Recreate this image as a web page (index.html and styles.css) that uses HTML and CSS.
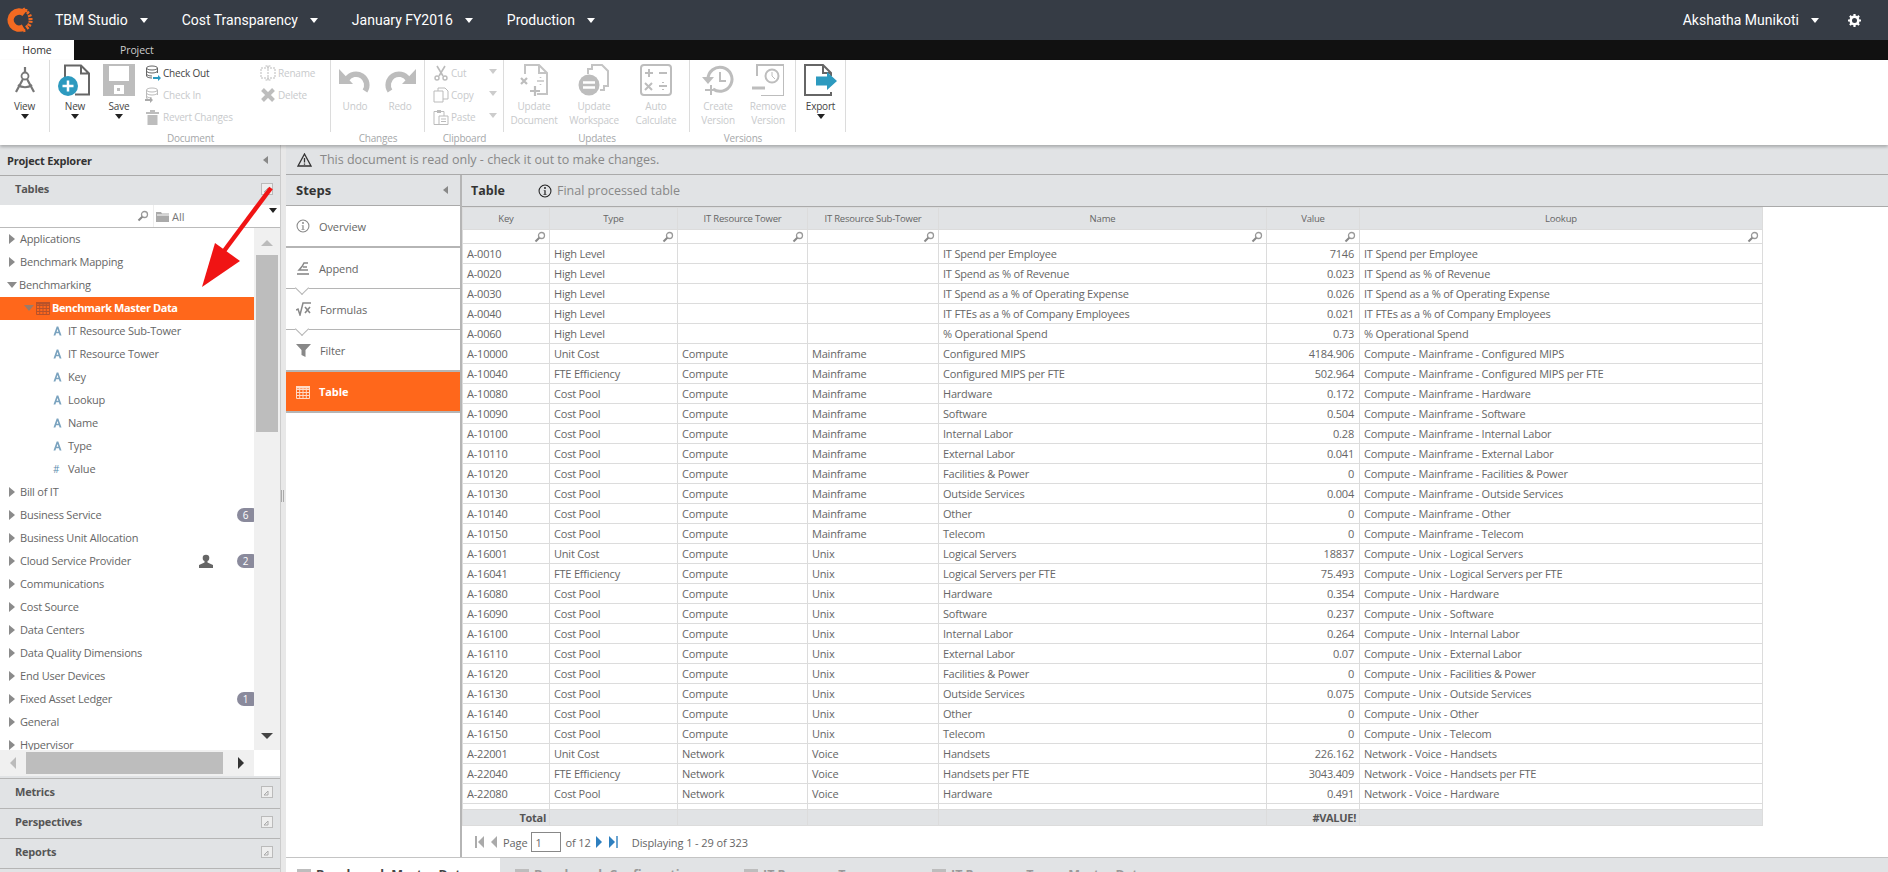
FILE: index.html
```html
<!DOCTYPE html>
<html lang="en">
<head>
  <meta charset="UTF-8">
  <title>TBM Studio - Benchmark Master Data</title>
  <link rel="stylesheet" href="styles.css">
</head>
<body>

<svg class="defs" width="0" height="0">
  <symbol id="i-search" viewBox="0 0 12 12">
    <circle cx="7.5" cy="4.5" r="3" fill="#fff" stroke="#999" stroke-width="1.3"/>
    <path d="M5.3 6.7 1.5 10.5" stroke="#888" stroke-width="2"/>
  </symbol>
  <symbol id="i-pin" viewBox="0 0 12 12">
    <rect x=".5" y=".5" width="11" height="11" fill="#eee" stroke="#bbb"/>
    <path d="M3 9h4V5M3 9l4-4" fill="none" stroke="#aaa"/>
  </symbol>
  <symbol id="i-info" viewBox="0 0 16 16">
    <circle cx="8" cy="8" r="6.8" fill="none" stroke="currentColor" stroke-width="1.2"/>
    <path d="M6.5 7h2.2v4.5h1v.8h-3.4v-.8h1V7.800h-.8z" fill="currentColor"/>
    <circle cx="8" cy="4.600" r="1.100" fill="currentColor"/>
  </symbol>
  <symbol id="i-grid" viewBox="0 0 14 14">
    <path d="M.5 1.500h13v12H.5zM.5 4.500h13M.5 7.500h13M.5 10.500h13M3.700 1.500v12M7 1.500v12M10.300 1.500v12" fill="none" stroke="currentColor"/>
    <rect x="0" y="1" width="14" height="2.500" fill="currentColor"/>
  </symbol>
  <symbol id="i-attr" viewBox="0 0 9 10">
    <path d="M.5 9.500 3.700.5h1.600l3.200 9H6.600l-.7-2.300H3.100L2.400 9.500zM3.600 5.800h1.800L4.500 3z" fill="#7aa3bf"/>
  </symbol>
  <symbol id="i-drawer" viewBox="0 0 16 16">
    <ellipse cx="7" cy="3" rx="5.500" ry="2" fill="none" stroke="currentColor"/>
    <path d="M1.500 3v8c0 1 2.500 2 5.500 2M12.500 3v5M1.500 6c0 1 2.500 2 5.500 2s5.500-1 5.500-2M1.500 9c0 1 2.500 2 5.500 2" fill="none" stroke="currentColor"/>
  </symbol>
</svg>

<header class="topbar">
  <svg class="logo" width="26" height="26" viewBox="0 0 26 26">
    <path d="M17 6.500A8.500 8.500 0 1 0 16 20.400" fill="none" stroke="#f26a21" stroke-width="6.500"/>
    <path d="M16 1l1.500 3M19 2l-.5 3M21.500 4.500l-2 2.500M24 8l-3.500 1.500M25 12h-4M25 15l-4-.5M23.500 19l-3.500-2M21 22l-2.500-3.500M17 25l-.5-3" stroke="#f26a21" stroke-width="2.200"/>
  </svg>
  <nav class="nav">
    <a>TBM Studio<i class="caret"></i></a>
    <a>Cost Transparency<i class="caret"></i></a>
    <a>January FY2016<i class="caret"></i></a>
    <a>Production<i class="caret"></i></a>
  </nav>
  <div class="user">Akshatha Munikoti<i class="caret"></i></div>
  <svg class="gear" width="13" height="13" viewBox="0 0 13 13">
    <circle cx="6.500" cy="6.500" r="3.800" fill="none" stroke="#fff" stroke-width="2.600"/>
    <path d="M6.500 0v13M0 6.500h13M1.900 1.900l9.200 9.200M11.100 1.900l-9.200 9.200" stroke="#fff" stroke-width="2.200" stroke-dasharray="2.600 7.800"/>
  </svg>
</header>

<div class="ribbon-tabs">
  <span class="rtab active">Home</span>
  <span class="rtab">Project</span>
</div>

<section class="ribbon">
  <div class="rgroup g-view">
    <div class="rbody">
      <div class="bigbtn">
        <svg width="32" height="32" viewBox="0 0 32 32">
          <circle cx="16" cy="12" r="3.500" fill="none" stroke="#777" stroke-width="1.800"/>
          <path d="M16 3v6M14 15 7 28M18 15l7 13M9 21c4 3 10 3 14 0" fill="none" stroke="#777" stroke-width="2.200"/>
        </svg>
        <span>View</span><i class="drop"></i>
      </div>
    </div>
  </div>

  <div class="rgroup g-doc">
    <div class="rbody">
      <div class="bigbtn b-new">
        <svg width="34" height="32" viewBox="0 0 34 32">
          <path d="M7 14V1.500h16l8 8v21H17M23 1.500v8h8" fill="none" stroke="#666" stroke-width="2"/>
          <circle cx="10" cy="22" r="10" fill="#2d9abf"/>
          <path d="M10 16.500v11M4.500 22h11" stroke="#fff" stroke-width="2.500"/>
        </svg>
        <span>New</span><i class="drop"></i>
      </div>
      <div class="bigbtn b-save">
        <svg width="32" height="32" viewBox="0 0 32 32">
          <path d="M0 0h32v32H0z" fill="#bdbdbd"/>
          <path d="M6 2h20v15H6z" fill="#fff"/>
          <path d="M11 21h10v9H11z" fill="#fff"/>
          <path d="M14 24h3v3h-3z" fill="#bdbdbd"/>
        </svg>
        <span>Save</span><i class="drop"></i>
      </div>
      <div class="smallcol c-check">
        <div class="smallbtn on"><svg class="ic" width="16" height="16" viewBox="0 0 16 16"><use href="#i-drawer" color="#666"/><path d="M8 12h5v-2l3 3-3 3v-2H8z" fill="#2d9abf"/></svg>Check Out</div>
        <div class="smallbtn"><svg class="ic" width="16" height="16" viewBox="0 0 16 16"><use href="#i-drawer" color="#bbb"/><path d="M0 12h5v-2l3 3-3 3v-2H0z" fill="#aaa"/></svg>Check In</div>
        <div class="smallbtn"><svg class="ic" width="16" height="16" viewBox="0 0 16 16"><path d="M1 3h13v2H1zM5 3V1h5v2zM2.500 6h10v10h-10z" fill="#bdbdbd"/></svg>Revert Changes</div>
      </div>
      <div class="smallcol c-rename">
        <div class="smallbtn"><svg class="ic" width="16" height="16" viewBox="0 0 16 16"><path d="M1 3h14v10H1zM8 1v14M5.500 1h5M5.500 15h5" fill="none" stroke="#bbb" stroke-dasharray="2 1"/></svg>Rename</div>
        <div class="smallbtn"><svg class="ic" width="16" height="16" viewBox="0 0 16 16"><path d="M2.500 2.500l11 11M13.500 2.500l-11 11" stroke="#bdbdbd" stroke-width="4"/></svg>Delete</div>
      </div>
    </div>
    <div class="rlabel">Document</div>
  </div>

  <div class="rgroup g-changes">
    <div class="rbody">
      <div class="bigbtn w-undo">
        <svg width="32" height="32" viewBox="0 0 32 32"><path d="M8 13a10.500 10.500 0 0 1 18 12" fill="none" stroke="#bdbdbd" stroke-width="5.500" transform="translate(0 2)"/><path d="M0 5v15h14z" fill="#bdbdbd"/></svg>
        <span>Undo</span>
      </div>
      <div class="bigbtn w-redo">
        <svg width="32" height="32" viewBox="0 0 32 32"><path d="M24 13A10.500 10.500 0 0 0 6 25" fill="none" stroke="#bdbdbd" stroke-width="5.500" transform="translate(0 2)"/><path d="M32 5v15H18z" fill="#bdbdbd"/></svg>
        <span>Redo</span>
      </div>
    </div>
    <div class="rlabel">Changes</div>
  </div>

  <div class="rgroup g-clip">
    <div class="rbody">
      <div class="smallcol c-clip">
        <div class="smallbtn"><svg class="ic" width="16" height="16" viewBox="0 0 16 16"><path d="M4 1l6 10M12 1 6 11" stroke="#bbb" stroke-width="1.600"/><circle cx="4" cy="13" r="2" fill="none" stroke="#bbb" stroke-width="1.400"/><circle cx="12" cy="13" r="2" fill="none" stroke="#bbb" stroke-width="1.400"/></svg>Cut<i class="drop pale"></i></div>
        <div class="smallbtn"><svg class="ic" width="16" height="16" viewBox="0 0 16 16"><path d="M1 4h9v11H1zM5 4V1h7l3 3v8h-5" fill="#fff" stroke="#bbb"/></svg>Copy<i class="drop pale"></i></div>
        <div class="smallbtn"><svg class="ic" width="16" height="16" viewBox="0 0 16 16"><path d="M1 2.500h10v13H1z" fill="#fff" stroke="#bbb"/><path d="M4 1h4v3H4z" fill="#bbb"/><path d="M6 7h9v8.500H6z" fill="#fff" stroke="#bbb"/><path d="M8 10h5M8 12.500h5" stroke="#bbb"/></svg>Paste<i class="drop pale"></i></div>
      </div>
    </div>
    <div class="rlabel">Clipboard</div>
  </div>

  <div class="rgroup g-updates">
    <div class="rbody">
      <div class="bigbtn w-upd">
        <svg width="32" height="32" viewBox="0 0 32 32"><path d="M7 10V1h14l8 8v21H19M21 1v8h8" fill="none" stroke="#c4c4c4" stroke-width="2"/><path d="M3 14l6 6M9 14l-6 6M12 27h10M17 22v10" stroke="#bdbdbd" stroke-width="2.200"/><path d="M19 17h7M22.500 13v1M22.500 20v1" stroke="#c4c4c4" stroke-width="1.600"/></svg>
        <span>Update<br>Document</span>
      </div>
      <div class="bigbtn w-upd">
        <svg width="32" height="32" viewBox="0 0 32 32"><path d="M10 10V5h4V1h10l6 6v15h-4v4h-4" fill="none" stroke="#c4c4c4" stroke-width="2"/><circle cx="11" cy="21" r="10.500" fill="#bdbdbd"/><path d="M5 18.500h12M5 23.500h12" stroke="#fff" stroke-width="2.400"/></svg>
        <span>Update<br>Workspace</span>
      </div>
      <div class="bigbtn w-auto">
        <svg width="32" height="32" viewBox="0 0 32 32"><rect x="1" y="1" width="30" height="30" rx="3" fill="none" stroke="#bdbdbd" stroke-width="2"/><path d="M5 9h8M9 5v8M19 9h8M5 19l7 7M12 19l-7 7M19 22h8M23 18v1M23 25v1" stroke="#bdbdbd" stroke-width="2"/></svg>
        <span>Auto<br>Calculate</span>
      </div>
    </div>
    <div class="rlabel">Updates</div>
  </div>

  <div class="rgroup g-ver">
    <div class="rbody">
      <div class="bigbtn w-create">
        <svg width="32" height="32" viewBox="0 0 32 32"><path d="M6 15a12 12 0 1 1 5 10" fill="none" stroke="#bdbdbd" stroke-width="3"/><path d="M0 13h12l-6 7z" fill="#bdbdbd"/><path d="M18 8v9h6" fill="none" stroke="#bdbdbd" stroke-width="2"/><path d="M3 27h8M9 22v10" stroke="#bdbdbd" stroke-width="2" transform="translate(0 -1)"/></svg>
        <span>Create<br>Version</span>
      </div>
      <div class="bigbtn w-remove">
        <svg width="32" height="32" viewBox="0 0 32 32"><path d="M5 12V1h27v31H9" fill="none" stroke="#bdbdbd" stroke-width="2"/><circle cx="20" cy="12" r="6.500" fill="none" stroke="#bdbdbd" stroke-width="2"/><path d="M20 8v4l3 3" fill="none" stroke="#bdbdbd"/><path d="M0 24h13" stroke="#bdbdbd" stroke-width="3"/></svg>
        <span>Remove<br>Version</span>
      </div>
    </div>
    <div class="rlabel">Versions</div>
  </div>

  <div class="rgroup g-export">
    <div class="rbody">
      <div class="bigbtn w-exp">
        <svg width="34" height="32" viewBox="0 0 34 32">
          <path d="M27 12V9l-8-8H1v30h26v-3M19 1v8h8" fill="none" stroke="#666" stroke-width="2"/>
          <path d="M12 15h11v-5l10 10-10 10v-5H12z" fill="#2d9abf" transform="translate(0 -1) scale(1 .9)"/>
        </svg>
        <span>Export</span><i class="drop"></i>
      </div>
    </div>
  </div>
</section>

<div class="work">
  <aside class="explorer">
    <div class="panel-head">Project Explorer<i class="collapse"></i></div>
    <div class="acc-head first">Tables<svg class="pin" width="12" height="12"><use href="#i-pin"/></svg></div>

    <div class="tree-search">
      <div class="search-box"><svg width="12" height="12"><use href="#i-search"/></svg></div>
      <div class="folder-box">
        <svg width="13" height="12" viewBox="0 0 13 12"><path d="M0 2h5l1 1.500h7V12H0z" fill="#aaa"/><path d="M1 5h12" stroke="#fff"/></svg>
        <span>All</span><i class="drop"></i>
      </div>
    </div>

    <div class="tree-wrap">
      <div class="tree">
        <div class="tn"><i class="tw"></i>Applications</div>
        <div class="tn"><i class="tw"></i>Benchmark Mapping</div>
        <div class="tn"><i class="tw open"></i>Benchmarking</div>
        <div class="tn sel"><i class="tw open"></i><svg class="tbl" width="14" height="14" color="#b8522a"><use href="#i-grid"/></svg>Benchmark Master Data</div>
        <div class="tn leaf"><svg width="9" height="10"><use href="#i-attr"/></svg>IT Resource Sub-Tower</div>
        <div class="tn leaf"><svg width="9" height="10"><use href="#i-attr"/></svg>IT Resource Tower</div>
        <div class="tn leaf"><svg width="9" height="10"><use href="#i-attr"/></svg>Key</div>
        <div class="tn leaf"><svg width="9" height="10"><use href="#i-attr"/></svg>Lookup</div>
        <div class="tn leaf"><svg width="9" height="10"><use href="#i-attr"/></svg>Name</div>
        <div class="tn leaf"><svg width="9" height="10"><use href="#i-attr"/></svg>Type</div>
        <div class="tn leaf"><b class="hash">#</b>Value</div>
        <div class="tn"><i class="tw"></i>Bill of IT</div>
        <div class="tn"><i class="tw"></i>Business Service<span class="badge">6</span></div>
        <div class="tn"><i class="tw"></i>Business Unit Allocation</div>
        <div class="tn"><i class="tw"></i>Cloud Service Provider
          <svg class="person" width="14" height="14" viewBox="0 0 14 14"><circle cx="7" cy="4" r="3.300" fill="#666"/><path d="M5.500 7h3v1.500L14 11v3H0v-3l5.500-2.500z" fill="#666"/></svg>
          <span class="badge">2</span></div>
        <div class="tn"><i class="tw"></i>Communications</div>
        <div class="tn"><i class="tw"></i>Cost Source</div>
        <div class="tn"><i class="tw"></i>Data Centers</div>
        <div class="tn"><i class="tw"></i>Data Quality Dimensions</div>
        <div class="tn"><i class="tw"></i>End User Devices</div>
        <div class="tn"><i class="tw"></i>Fixed Asset Ledger<span class="badge">1</span></div>
        <div class="tn"><i class="tw"></i>General</div>
        <div class="tn"><i class="tw"></i>Hypervisor</div>
      </div>
      <div class="vscroll">
        <i class="arr up"></i>
        <div class="vthumb"></div>
        <i class="arr down"></i>
      </div>
    </div>

    <div class="hscroll">
      <i class="arr left"></i>
      <div class="hthumb"></div>
      <i class="arr right"></i>
    </div>

    <div class="acc-head">Metrics<svg class="pin" width="12" height="12"><use href="#i-pin"/></svg></div>
    <div class="acc-head">Perspectives<svg class="pin" width="12" height="12"><use href="#i-pin"/></svg></div>
    <div class="acc-head">Reports<svg class="pin" width="12" height="12"><use href="#i-pin"/></svg></div>
  </aside>

  <div class="splitter"><i></i></div>

  <main class="main">
    <div class="notice">
      <svg width="15" height="14" viewBox="0 0 15 14"><path d="M7.500 1 14 13H1z" fill="none" stroke="#333" stroke-width="1.300"/><path d="M7.500 5v4.500M7.500 10.500v1.300" stroke="#333" stroke-width="1.300"/></svg>
      This document is read only - check it out to make changes.
    </div>

    <div class="content">
      <div class="steps">
        <div class="panel-head steps-head">Steps<i class="collapse"></i></div>
        <div class="step thick">
          <svg width="14" height="14" color="#888"><use href="#i-info"/></svg>Overview
        </div>
        <div class="step link">
          <svg width="14" height="14" viewBox="0 0 14 14"><path d="M1 13h12" stroke="#888" stroke-width="1.600"/><path d="M12 2H8L6 5.500 3 9h9M7 6h4" fill="none" stroke="#888" stroke-width="1.500"/></svg>Append
        </div>
        <div class="step link">
          <svg width="15" height="14" viewBox="0 0 15 14"><path d="M0 8l2-1 2 6L7 1h8" fill="none" stroke="#888" stroke-width="1.500"/><path d="M9 5l5 6M14 5l-5 6" stroke="#888" stroke-width="1.600"/></svg>Formulas
        </div>
        <div class="step">
          <svg width="15" height="14" viewBox="0 0 15 14"><path d="M0 1h15L9.500 7v7l-4-2V7z" fill="#888"/></svg>Filter
        </div>
        <div class="step current">
          <svg width="14" height="14" color="#fff" opacity=".75"><use href="#i-grid"/></svg>Table
        </div>
      </div>

      <div class="table-panel">
        <div class="table-head">
          <h2>Table</h2>
          <svg width="14" height="14" color="#222"><use href="#i-info"/></svg>
          <span>Final processed table</span>
        </div>
        <div class="grid-wrap">
          <table class="grid">
            <colgroup>
              <col class="c1"><col class="c2"><col class="c3"><col class="c4"><col class="c5"><col class="c6"><col class="c7">
            </colgroup>
            <thead>
              <tr class="hd"><th>Key</th><th>Type</th><th>IT Resource Tower</th><th>IT Resource Sub-Tower</th><th>Name</th><th>Value</th><th>Lookup</th></tr>
              <tr class="flt">
                <td><svg width="12" height="12"><use href="#i-search"/></svg></td>
                <td><svg width="12" height="12"><use href="#i-search"/></svg></td>
                <td><svg width="12" height="12"><use href="#i-search"/></svg></td>
                <td><svg width="12" height="12"><use href="#i-search"/></svg></td>
                <td><svg width="12" height="12"><use href="#i-search"/></svg></td>
                <td><svg width="12" height="12"><use href="#i-search"/></svg></td>
                <td><svg width="12" height="12"><use href="#i-search"/></svg></td>
              </tr>
            </thead>
            <tbody>
              <tr><td>A-0010</td><td>High Level</td><td></td><td></td><td>IT Spend per Employee</td><td class="n">7146</td><td>IT Spend per Employee</td></tr>
              <tr><td>A-0020</td><td>High Level</td><td></td><td></td><td>IT Spend as % of Revenue</td><td class="n">0.023</td><td>IT Spend as % of Revenue</td></tr>
              <tr><td>A-0030</td><td>High Level</td><td></td><td></td><td>IT Spend as a % of Operating Expense</td><td class="n">0.026</td><td>IT Spend as a % of Operating Expense</td></tr>
              <tr><td>A-0040</td><td>High Level</td><td></td><td></td><td>IT FTEs as a % of Company Employees</td><td class="n">0.021</td><td>IT FTEs as a % of Company Employees</td></tr>
              <tr><td>A-0060</td><td>High Level</td><td></td><td></td><td>% Operational Spend</td><td class="n">0.73</td><td>% Operational Spend</td></tr>
              <tr><td>A-10000</td><td>Unit Cost</td><td>Compute</td><td>Mainframe</td><td>Configured MIPS</td><td class="n">4184.906</td><td>Compute - Mainframe - Configured MIPS</td></tr>
              <tr><td>A-10040</td><td>FTE Efficiency</td><td>Compute</td><td>Mainframe</td><td>Configured MIPS per FTE</td><td class="n">502.964</td><td>Compute - Mainframe - Configured MIPS per FTE</td></tr>
              <tr><td>A-10080</td><td>Cost Pool</td><td>Compute</td><td>Mainframe</td><td>Hardware</td><td class="n">0.172</td><td>Compute - Mainframe - Hardware</td></tr>
              <tr><td>A-10090</td><td>Cost Pool</td><td>Compute</td><td>Mainframe</td><td>Software</td><td class="n">0.504</td><td>Compute - Mainframe - Software</td></tr>
              <tr><td>A-10100</td><td>Cost Pool</td><td>Compute</td><td>Mainframe</td><td>Internal Labor</td><td class="n">0.28</td><td>Compute - Mainframe - Internal Labor</td></tr>
              <tr><td>A-10110</td><td>Cost Pool</td><td>Compute</td><td>Mainframe</td><td>External Labor</td><td class="n">0.041</td><td>Compute - Mainframe - External Labor</td></tr>
              <tr><td>A-10120</td><td>Cost Pool</td><td>Compute</td><td>Mainframe</td><td>Facilities &amp; Power</td><td class="n">0</td><td>Compute - Mainframe - Facilities &amp; Power</td></tr>
              <tr><td>A-10130</td><td>Cost Pool</td><td>Compute</td><td>Mainframe</td><td>Outside Services</td><td class="n">0.004</td><td>Compute - Mainframe - Outside Services</td></tr>
              <tr><td>A-10140</td><td>Cost Pool</td><td>Compute</td><td>Mainframe</td><td>Other</td><td class="n">0</td><td>Compute - Mainframe - Other</td></tr>
              <tr><td>A-10150</td><td>Cost Pool</td><td>Compute</td><td>Mainframe</td><td>Telecom</td><td class="n">0</td><td>Compute - Mainframe - Telecom</td></tr>
              <tr><td>A-16001</td><td>Unit Cost</td><td>Compute</td><td>Unix</td><td>Logical Servers</td><td class="n">18837</td><td>Compute - Unix - Logical Servers</td></tr>
              <tr><td>A-16041</td><td>FTE Efficiency</td><td>Compute</td><td>Unix</td><td>Logical Servers per FTE</td><td class="n">75.493</td><td>Compute - Unix - Logical Servers per FTE</td></tr>
              <tr><td>A-16080</td><td>Cost Pool</td><td>Compute</td><td>Unix</td><td>Hardware</td><td class="n">0.354</td><td>Compute - Unix - Hardware</td></tr>
              <tr><td>A-16090</td><td>Cost Pool</td><td>Compute</td><td>Unix</td><td>Software</td><td class="n">0.237</td><td>Compute - Unix - Software</td></tr>
              <tr><td>A-16100</td><td>Cost Pool</td><td>Compute</td><td>Unix</td><td>Internal Labor</td><td class="n">0.264</td><td>Compute - Unix - Internal Labor</td></tr>
              <tr><td>A-16110</td><td>Cost Pool</td><td>Compute</td><td>Unix</td><td>External Labor</td><td class="n">0.07</td><td>Compute - Unix - External Labor</td></tr>
              <tr><td>A-16120</td><td>Cost Pool</td><td>Compute</td><td>Unix</td><td>Facilities &amp; Power</td><td class="n">0</td><td>Compute - Unix - Facilities &amp; Power</td></tr>
              <tr><td>A-16130</td><td>Cost Pool</td><td>Compute</td><td>Unix</td><td>Outside Services</td><td class="n">0.075</td><td>Compute - Unix - Outside Services</td></tr>
              <tr><td>A-16140</td><td>Cost Pool</td><td>Compute</td><td>Unix</td><td>Other</td><td class="n">0</td><td>Compute - Unix - Other</td></tr>
              <tr><td>A-16150</td><td>Cost Pool</td><td>Compute</td><td>Unix</td><td>Telecom</td><td class="n">0</td><td>Compute - Unix - Telecom</td></tr>
              <tr><td>A-22001</td><td>Unit Cost</td><td>Network</td><td>Voice</td><td>Handsets</td><td class="n">226.162</td><td>Network - Voice - Handsets</td></tr>
              <tr><td>A-22040</td><td>FTE Efficiency</td><td>Network</td><td>Voice</td><td>Handsets per FTE</td><td class="n">3043.409</td><td>Network - Voice - Handsets per FTE</td></tr>
              <tr><td>A-22080</td><td>Cost Pool</td><td>Network</td><td>Voice</td><td>Hardware</td><td class="n">0.491</td><td>Network - Voice - Hardware</td></tr>
              <tr class="filler"><td></td><td></td><td></td><td></td><td></td><td></td><td></td></tr>
            </tbody>
            <tfoot>
              <tr class="total"><td class="n">Total</td><td></td><td></td><td></td><td></td><td class="n">#VALUE!</td><td></td></tr>
            </tfoot>
          </table>
          <div class="pager">
            <svg width="11" height="12" viewBox="0 0 11 12"><path d="M1 0v12" stroke="#888" stroke-width="1.400"/><path d="M9 0v12L3 6z" fill="#aaa"/></svg>
            <svg class="pg-prev" width="7" height="12" viewBox="0 0 7 12"><path d="M6 0v12L0 6z" fill="#aaa"/></svg>
            <span>Page</span>
            <input class="page-input" value="1" readonly>
            <span>of 12</span>
            <svg width="7" height="12" viewBox="0 0 7 12"><path d="M0 0v12l6-6z" fill="#2d7fbf"/></svg>
            <svg width="11" height="12" viewBox="0 0 11 12"><path d="M1 0v12l6-6z" fill="#2d7fbf"/><path d="M9 0v12" stroke="#2d7fbf" stroke-width="1.400"/></svg>
            <span class="shown">Displaying 1 - 29 of 323</span>
          </div>
        </div>
      </div>
    </div>

    <div class="doc-tabs">
      <div class="dtab active"><i></i>Benchmark Master Data</div>
      <div class="dtab t2"><i></i>Benchmark Configuration</div>
      <div class="dtab t3"><i></i>IT Resource Towers</div>
      <div class="dtab t4"><i></i>IT Resource Tower Master Data</div>
    </div>
  </main>
</div>

<!-- arrow drawn on top of the screenshot -->
<svg class="annotation" width="90" height="120" viewBox="0 0 90 120">
  <path d="M81 5 34 68" stroke="#f01414" stroke-width="4.500"/>
  <path d="M12 104 25 60 50 78z" fill="#f01414"/>
</svg>

</body>
</html>
```

FILE: styles.css
```css
* {
  margin: 0;
  padding: 0;
  box-sizing: border-box;
}
html, body {
  height: 100%;
}
body {
  display: flex;
  flex-direction: column;
  overflow: hidden;
  position: relative;
  font-family: "Open Sans", "Noto Sans", sans-serif;
  font-size: 11px;
  color: #555;
  background: #e1e3e5;
}
i {
  display: inline-block;
  font-style: normal;
}
.defs {
  position: absolute;
}

/* top bar */
.topbar {
  height: 40px;
  flex: none;
  display: flex;
  align-items: center;
  background: #363c45;
  color: #fff;
  font-family: Roboto, sans-serif;
  font-size: 14px;
}
.logo {
  margin: 0 21px 0 7px;
  width: 27px;
}
.nav {
  display: flex;
}
.nav a {
  display: flex;
  align-items: center;
  margin-right: 34px;
}
.caret {
  width: 0;
  height: 0;
  margin-left: 12px;
  border: 4px solid transparent;
  border-top: 5px solid #fff;
  border-bottom: 0;
}
.user {
  margin-left: auto;
  display: flex;
  align-items: center;
}
.gear {
  margin: 0 27px 0 29px;
}

/* ribbon */
.ribbon-tabs {
  height: 20px;
  flex: none;
  display: flex;
  background: #111;
  font-size: 10.500px;
  letter-spacing: -.1px;
  line-height: 20px;
}
.rtab {
  width: 74px;
  text-align: center;
  color: #ccc;
}
.rtab.active {
  background: #fff;
  color: #333;
}
.rtab + .rtab {
  width: 90px;
  padding-left: 46px;
  text-align: left;
}
.ribbon {
  height: 85px;
  flex: none;
  display: flex;
  background: #fff;
  box-shadow: 0 2px 3px rgba(0, 0, 0, .25);
  position: relative;
  z-index: 2;
  color: #c8cacc;
  font-size: 10px;
  letter-spacing: -.2px;
}
.rgroup {
  display: flex;
  flex-direction: column;
}
.rbody {
  height: 72px;
  display: flex;
  border-right: 1px solid #dcdcdc;
}
.rlabel {
  text-align: center;
  line-height: 13px;
  color: #a5a7a9;
}
.g-view { width: 50px; }
.g-doc { width: 281px; }
.g-changes { width: 94px; }
.g-clip { width: 79px; }
.g-updates { width: 186px; }
.g-ver { width: 106px; }
.g-export { width: 50px; }

.bigbtn {
  display: flex;
  flex-direction: column;
  align-items: center;
  padding-top: 4px;
  text-align: center;
  line-height: 14px;
  white-space: nowrap;
}
.bigbtn svg {
  flex: none;
  margin-bottom: 3px;
}
.g-view .bigbtn {
  width: 49px;
  color: #444;
}
.b-new, .b-save, .w-exp {
  color: #444;
}
.b-new {
  width: 44px;
  margin-left: 3px;
}
.b-save {
  width: 44px;
}
.drop {
  width: 0;
  height: 0;
  border: 4px solid transparent;
  border-top: 5px solid #222;
  border-bottom: 0;
  margin-top: 1px;
}
.drop.pale {
  border-top-color: #ccc;
  position: absolute;
  right: 6px;
  top: 6px;
}
.smallcol {
  display: flex;
  flex-direction: column;
  padding-top: 2px;
}
.c-check {
  width: 115px;
  margin-left: 4px;
}
.c-rename {
  width: 70px;
}
.c-clip {
  width: 78px;
  padding-left: 8px;
}
.smallbtn {
  height: 22px;
  display: flex;
  align-items: center;
  position: relative;
  white-space: nowrap;
}
.smallbtn .ic {
  margin-right: 2px;
  flex: none;
}
.smallbtn.on {
  color: #444;
}
.w-undo { width: 48px; }
.w-redo { width: 42px; }
.w-upd { width: 60px; }
.w-auto { width: 64px; }
.w-create { width: 56px; }
.w-remove { width: 44px; }
.w-exp { width: 49px; }

/* work area */
.work {
  flex: 1;
  min-height: 0;
  display: flex;
}
.explorer {
  width: 280px;
  flex: none;
  display: flex;
  flex-direction: column;
}
.panel-head {
  height: 31px;
  flex: none;
  display: flex;
  align-items: center;
  padding: 0 7px;
  font-weight: 700;
  font-size: 11px;
  letter-spacing: -.2px;
  color: #333;
  border-bottom: 1px solid #aaa;
}
.collapse {
  margin-left: auto;
  margin-right: 5px;
  width: 0;
  height: 0;
  border: 4px solid transparent;
  border-right: 5px solid #888;
  border-left: 0;
}
.acc-head {
  height: 30px;
  flex: none;
  display: flex;
  align-items: center;
  padding: 0 15px 4px;
  font-weight: 700;
  font-size: 11px;
  letter-spacing: -.2px;
  color: #555;
  border-bottom: 1px solid #b5b5b5;
}
.acc-head.first {
  border-bottom: 0;
  height: 29px;
}
.acc-head .pin {
  margin-left: auto;
  margin-right: -8px;
}
.tree-search {
  height: 23px;
  flex: none;
  display: flex;
  background: #fff;
  border-bottom: 1px solid #bbb;
}
.search-box {
  width: 154px;
  display: flex;
  justify-content: flex-end;
  align-items: center;
  padding-right: 4px;
  border-right: 1px solid #eee;
}
.folder-box {
  flex: 1;
  display: flex;
  align-items: center;
  gap: 3px;
  padding-left: 2px;
  color: #777;
}
.folder-box .drop {
  margin: -12px 3px 0 auto;
}
.tree-wrap {
  height: 522px;
  flex: none;
  display: flex;
  background: #fff;
}
.tree {
  width: 254px;
  flex: none;
  overflow: hidden;
}
.tn {
  height: 23px;
  display: flex;
  align-items: center;
  padding: 0 0 2px 9px;
  font-size: 11px;
  letter-spacing: -.2px;
  color: #666;
  white-space: nowrap;
  overflow: hidden;
}
.tw {
  width: 0;
  height: 0;
  margin-right: 5px;
  flex: none;
  border: 5px solid transparent;
  border-left: 6px solid #8b8b8b;
  border-right: 0;
}
.tw.open {
  margin-left: -2px;
  margin-right: 2px;
  border: 5px solid transparent;
  border-top: 6px solid #8b8b8b;
  border-bottom: 0;
}
.tn.sel {
  background: #ff671b;
  color: #fff;
  font-weight: 700;
  letter-spacing: -.4px;
  padding-left: 26px;
}
.tn.sel .tw.open {
  border-top-color: #9a7a6a;
}
.tn.sel .tbl {
  margin-right: 2px;
}
.tn.leaf {
  padding-left: 53px;
}
.tn.leaf svg, .hash {
  width: 9px;
  margin-right: 6px;
  flex: none;
}
.hash {
  font-weight: 400;
  font-size: 10px;
  color: #5d8fb0;
}
.badge {
  width: 22px;
  height: 14px;
  margin-left: auto;
  margin-right: -5px;
  flex: none;
  padding-right: 5px;
  border-radius: 7px;
  background: #8a8a9c;
  color: #fff;
  font-size: 10px;
  line-height: 14px;
  text-align: center;
}
.person {
  margin-left: auto;
}
.person + .badge {
  margin-left: 24px;
}
.vscroll {
  flex: 1;
  display: flex;
  flex-direction: column;
  align-items: center;
  background: #f0f0f0;
}
.arr {
  width: 0;
  height: 0;
  flex: none;
  border: 6px solid transparent;
}
.arr.up {
  border-bottom-color: #bbb;
  border-top: 0;
  margin: 12px 0 9px;
}
.arr.down {
  border-top-color: #444;
  border-bottom: 0;
  margin-top: auto;
  margin-bottom: 11px;
}
.vthumb {
  width: 22px;
  height: 177px;
  background: #bdbdbd;
}
.hscroll {
  height: 26px;
  flex: none;
  width: 254px;
  display: flex;
  align-items: center;
  padding-left: 10px;
  margin-bottom: 2px;
  background: #f0f0f0;
  box-shadow: 26px 0 0 #fff;
}
.arr.left {
  border-right-color: #bbb;
  border-left: 0;
  margin-right: 10px;
}
.arr.right {
  border-left-color: #333;
  border-right: 0;
  margin-left: 15px;
}
.hthumb {
  width: 197px;
  height: 22px;
  background: #bdbdbd;
}
.hscroll + .acc-head {
  border-top: 1px solid #b5b5b5;
  height: 31px;
}
.splitter {
  width: 6px;
  flex: none;
  background: #e8e8e8;
  border-left: 1px solid #ccc;
  display: flex;
  align-items: center;
}
.splitter i {
  width: 3px;
  height: 12px;
  border: 1px solid #aaa;
  border-width: 0 1px;
  margin-top: -26px;
}

/* main */
.main {
  flex: 1;
  min-width: 0;
  display: flex;
  flex-direction: column;
}
.notice {
  height: 30px;
  flex: none;
  display: flex;
  align-items: center;
  gap: 8px;
  padding-left: 11px;
  font-size: 12.500px;
  color: #888;
  border-bottom: 1px solid #aaa;
}
.content {
  flex: 1;
  min-height: 0;
  display: flex;
}
.steps {
  width: 176px;
  flex: none;
  display: flex;
  flex-direction: column;
  background: #fff;
  border-right: 2px solid #b5b5b5;
}
.steps-head {
  height: 31px;
  background: #e1e3e5;
  font-size: 13px;
  letter-spacing: 0;
  padding-left: 10px;
}
.step {
  height: 41px;
  flex: none;
  display: flex;
  align-items: center;
  gap: 9px;
  padding-left: 10px;
  font-size: 11px;
  letter-spacing: -.1px;
  color: #666;
  border-bottom: 1px solid #b5b5b5;
}
.step.thick {
  height: 42px;
  border-bottom-width: 2px;
}
.step.link {
  position: relative;
}
.step.link::after {
  content: "";
  position: absolute;
  left: 11px;
  bottom: -5px;
  width: 9px;
  height: 9px;
  background: #fff;
  border: 1px solid #b5b5b5;
  border-width: 0 1px 1px 0;
  transform: rotate(45deg);
}
.step.current {
  height: 43px;
  background: #ff671b;
  color: #fff;
  font-weight: 700;
  border-top: 2px solid #b5b5b5;
  border-bottom: 2px solid #b5b5b5;
  margin-top: -1px;
}
.table-panel {
  flex: 1;
  min-width: 0;
  display: flex;
  flex-direction: column;
  background: #fff;
}
.table-head {
  height: 32px;
  flex: none;
  display: flex;
  align-items: center;
  padding-left: 9px;
  background: #e1e3e5;
  border-bottom: 1px solid #aaa;
  font-size: 12.500px;
  color: #888;
}
.table-head h2 {
  width: 67px;
  font-size: 12.500px;
  font-weight: 700;
  color: #333;
}
.table-head svg {
  margin-right: 5px;
}
.grid-wrap {
  flex: 1;
}
.grid {
  width: 1300px;
  table-layout: fixed;
  border-collapse: collapse;
  font-size: 11px;
  letter-spacing: -.2px;
  color: #666;
}
.c1 { width: 87px; }
.c2 { width: 128px; }
.c3 { width: 130px; }
.c4 { width: 131px; }
.c5 { width: 328px; }
.c6 { width: 93px; }
.c7 { width: 403px; }
.grid td, .grid th {
  border: 1px solid #dcdcdc;
  white-space: nowrap;
  overflow: hidden;
}
.grid tbody tr {
  height: 20px;
}
.grid tbody td {
  padding: 0 5px 0 4px;
}
.hd {
  height: 22px;
}
.hd th {
  background: #e1e3e5;
  font-weight: 400;
  font-size: 9.500px;
  color: #666;
}
.flt {
  height: 14px;
}
.flt td {
  padding: 0 3px 0 0;
  text-align: right;
  line-height: 0;
}
.grid .n {
  text-align: right;
}
.grid tbody tr.filler {
  height: 6px;
}
.filler td {
  line-height: 0;
}
.total {
  height: 16px;
  background: #e1e3e5;
  font-weight: 700;
  font-size: 11px;
  letter-spacing: -.3px;
  color: #555;
}
.total td {
  padding: 0 3px;
  line-height: 14px;
}
.pager {
  height: 32px;
  display: flex;
  align-items: center;
  padding-left: 13px;
  font-size: 11px;
  letter-spacing: -.1px;
  color: #666;
}
.pg-prev {
  margin-left: 5px;
  margin-right: 5px;
}
.page-input {
  width: 30px;
  height: 20px;
  margin: 0 4px;
  padding-left: 3px;
  border: 1px solid #888;
  font: inherit;
  color: #666;
}
.pager span + svg {
  margin-left: 5px;
}
.pager svg + svg:not(.pg-prev) {
  margin-left: 5px;
}
.shown {
  margin-left: 13px;
}

/* document tabs, mostly cut off by the window */
.doc-tabs {
  height: 15px;
  flex: none;
  display: flex;
  background: #e1e3e5;
  border-top: 1px solid #c4c4c4;
  font-size: 12.500px;
  line-height: 12px;
  font-weight: 700;
  color: #999;
  white-space: nowrap;
  overflow: hidden;
}
.dtab {
  padding: 11px 0 0 11px;
  display: flex;
  gap: 5px;
  height: 30px;
}
.dtab i {
  width: 14px;
  height: 14px;
  background: #bdbdbd;
}
.dtab.active {
  width: 214px;
  background: #fff;
  color: #444;
}
.t2 { width: 229px; padding-left: 15px; }
.t3 { width: 188px; padding-left: 15px; }
.t4 { width: 300px; padding-left: 15px; }

.annotation {
  position: absolute;
  left: 190px;
  top: 183px;
  z-index: 5;
}
```
